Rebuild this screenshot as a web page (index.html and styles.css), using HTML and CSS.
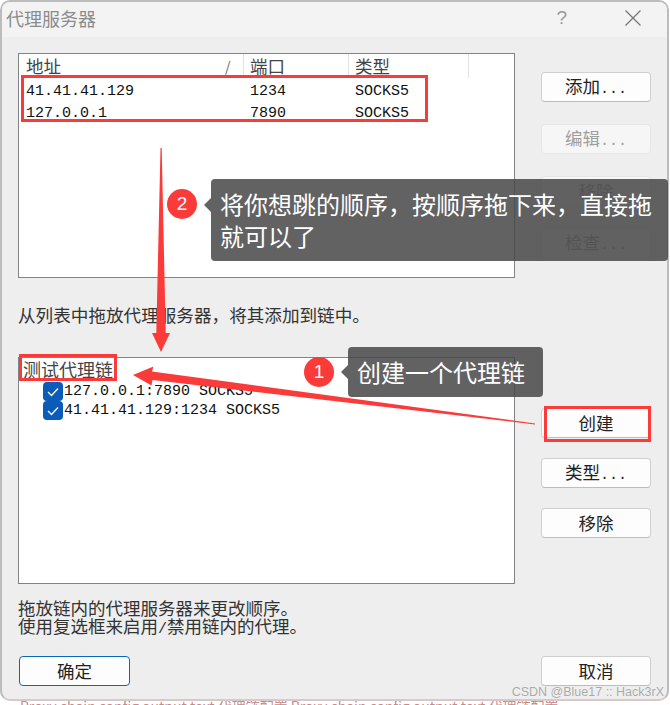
FILE: index.html
```html
<!DOCTYPE html>
<html lang="zh">
<head>
<meta charset="utf-8">
<title>代理服务器</title>
<link rel="stylesheet" href="styles.css">
</head>
<body>
<div class="stage">
  <div class="backdrop-text">Proxy chain config output text 代理链配置 Proxy chain config output text 代理链配置</div>
  <div class="dialog">
    <header class="titlebar">
      <span class="title">代理服务器</span>
      <span class="help">?</span>
      <svg class="close" width="16" height="16" viewBox="0 0 16 16"><path d="M.5.5l15 15M15.500.5l-15 15" stroke="#777" stroke-width="1.300" fill="none"/></svg>
    </header>
    <main class="content">
      <section class="row row-servers">
        <div class="list">
          <div class="grid-row head">
            <span class="cell first">地址<i class="sort">/</i></span>
            <span class="cell">端口</span>
            <span class="cell">类型</span>
            <span class="cell"></span>
          </div>
          <div class="grid-row lat"><span class="cell first">41.41.41.129</span><span class="cell">1234</span><span class="cell">SOCKS5</span></div>
          <div class="grid-row lat"><span class="cell first">127.0.0.1</span><span class="cell">7890</span><span class="cell">SOCKS5</span></div>
        </div>
        <div class="buttons buttons-top">
          <button class="btn">添加<span class="lat">...</span></button>
          <button class="btn off">编辑<span class="lat">...</span></button>
          <button class="btn off">移除</button>
          <button class="btn off">检查<span class="lat">...</span></button>
        </div>
      </section>
      <p class="hint">从列表中拖放代理服务器，将其添加到链中。</p>
      <section class="row row-chain">
        <div class="list chain">
          <div class="chain-name">测试代理链</div>
          <div class="chain-item lat"><span class="check"><svg width="12" height="10" viewBox="0 0 12 10"><path d="M1 5l3.500 3.500L11 1.500" stroke="#fff" stroke-width="1.300" fill="none"/></svg></span>127.0.0.1:7890 SOCKS5</div>
          <div class="chain-item lat"><span class="check"><svg width="12" height="10" viewBox="0 0 12 10"><path d="M1 5l3.500 3.500L11 1.500" stroke="#fff" stroke-width="1.300" fill="none"/></svg></span>41.41.41.129:1234 SOCKS5</div>
        </div>
        <div class="buttons buttons-chain">
          <button class="btn">创建</button>
          <button class="btn">类型<span class="lat">...</span></button>
          <button class="btn">移除</button>
        </div>
      </section>
      <p class="notes">拖放链内的代理服务器来更改顺序。<br>使用复选框来启用<span class="slash">/</span>禁用链内的代理。</p>
      <footer class="actions">
        <button class="btn primary">确定</button>
        <button class="btn">取消</button>
      </footer>
    </main>
  </div>

  <svg class="arrows" width="670" height="705" viewBox="0 0 670 705">
    <path d="M160.500 148h1.200l4 185h4.300L161 352l-9-19h4.300z" fill="#fb3a3a"/>
    <path d="M535 423.500L152 371.500l1.500-5L133 375l18.500 10.500 1-5.500L535 424.500z" fill="#fb3a3a"/>
  </svg>
  <div class="mark mark-servers"></div>
  <div class="mark mark-chain"></div>
  <div class="mark mark-create"></div>
  <div class="badge badge-two">2</div>
  <div class="bubble bubble-two">将你想跳的顺序，按顺序拖下来，直接拖就可以了</div>
  <div class="badge badge-one">1</div>
  <div class="bubble bubble-one">创建一个代理链</div>
  <div class="watermark">CSDN @Blue17 :: Hack3rX</div>
</div>
</body>
</html>
```
FILE: styles.css
```css
* { box-sizing: border-box; }
html, body { margin: 0; padding: 0; }
body { background: #fff; }
.stage {
  position: relative;
  width: 670px;
  height: 705px;
  overflow: hidden;
  background: #fff;
  font-family: "Noto Sans CJK SC", sans-serif;
  color: #222;
}
.backdrop-text {
  position: absolute;
  left: 20px;
  top: 698px;
  white-space: nowrap;
  font-size: 14px;
  line-height: 16px;
  color: #c98a8a;
}
.dialog {
  position: relative;
  width: 669px;
  height: 701px;
  background: #eee;
  border: 2px solid #bcbcbc;
  border-bottom-color: #d8c8c8;
  border-radius: 10px;
  overflow: hidden;
}
.titlebar {
  display: flex;
  align-items: center;
  height: 35px;
  padding: 0 26px 4px 4px;
  background: #f3f3f3;
}
.title { font-size: 18px; color: #8b8b8b; flex: 1; }
.help { font-size: 19px; color: #999; margin-right: 58px; font-family: "Liberation Sans", sans-serif; }
.content { padding: 16px 16px 0 16px; }
.row { display: flex; justify-content: space-between; }
.list {
  width: 497px;
  background: #fff;
  border: 1px solid #80838a;
}
.row-servers .list { height: 225px; }
.lat { font-family: "Liberation Mono", monospace; font-size: 15px; }
.grid-row {
  display: grid;
  grid-template-columns: 225px 105px 120px;
  height: 22px;
  align-items: center;
  line-height: 22px;
}
.head { height: 24px; margin-bottom: 3px; font-size: 17.500px; color: #444; grid-template-columns: 225px 105px 120px 1px; }
.head .cell { border-right: 1px solid #e2e2e2; height: 24px; line-height: 24px; position: relative; }
.head .cell:last-child { border: 0; }
.cell { padding-left: 6px; white-space: nowrap; color: #111; }
.head .cell { color: #444; }
.cell.first { padding-left: 7px; }
.sort { position: absolute; left: 206px; top: 0; font-size: 14px; font-style: normal; color: #666; }
.buttons { display: flex; flex-direction: column; width: 110px; }
.buttons-top { padding-top: 19px; gap: 22px; }
.buttons-chain { padding-top: 51px; gap: 20px; }
.btn {
  height: 30px;
  width: 110px;
  padding: 0;
  background: #fdfdfd;
  border: 1px solid #d0d0d0;
  border-bottom-color: #bdbdbd;
  border-radius: 4px;
  font-family: inherit;
  font-size: 17.500px;
  line-height: 26px;
  color: #222;
}
.btn.off { background: #f6f6f6; border-color: #e6e6e6; color: #a0a0a0; }
.hint {
  margin: 25px 0 0;
  height: 54px;
  font-size: 17.600px;
  line-height: 24px;
  color: #333;
}
.row-chain .list { height: 227px; padding-left: 4px; }
.chain-name { height: 24px; font-size: 18px; line-height: 22px; color: #444; }
.chain-item { display: flex; align-items: center; height: 19px; padding-left: 20px; color: #111; }
.check {
  display: flex;
  align-items: center;
  justify-content: center;
  width: 20px;
  height: 19px;
  margin-right: 1px;
  background: #0a5cb8;
  border-radius: 4px;
}
.notes {
  margin: 15px 0 0;
  height: 57px;
  font-size: 17.500px;
  line-height: 18px;
  color: #333;
  white-space: nowrap;
}
.slash { font-family: "Liberation Mono", monospace; font-size: 15px; }
.actions { display: flex; justify-content: space-between; padding-left: 1px; }
.btn.primary { width: 111px; border: 1px solid #0a67c0; }
.arrows { position: absolute; left: 0; top: 0; pointer-events: none; }
.mark { position: absolute; border: 3px solid #fb3a3a; }
.mark-servers { left: 21px; top: 75px; width: 407px; height: 47px; }
.mark-chain { left: 19px; top: 354px; width: 98px; height: 27px; }
.mark-create { left: 544px; top: 406px; width: 107px; height: 36px; }
.badge {
  position: absolute;
  width: 30px;
  height: 30px;
  border-radius: 50%;
  background: #fb3a3a;
  color: #fff;
  font-family: "Liberation Sans", sans-serif;
  font-size: 19px;
  line-height: 30px;
  text-align: center;
}
.badge-two { left: 167px; top: 189px; }
.badge-one { left: 304px; top: 357px; }
.bubble {
  position: absolute;
  padding-left: 9px;
  background: rgba(70, 70, 70, .85);
  border-radius: 4px;
  color: #fff;
  font-size: 24px;
}
.bubble::before {
  content: "";
  position: absolute;
  left: -7px;
  top: 19px;
  border: 7px solid transparent;
  border-left: 0;
  border-right-color: rgba(70, 70, 70, .85);
}
.bubble-two { left: 211px; top: 179px; width: 457px; height: 82px; padding-top: 9px; padding-right: 14px; line-height: 32px; }
.bubble-one { left: 348px; top: 347px; width: 195px; height: 50px; line-height: 50px; }
.bubble-one::before { top: 18px; }
.watermark {
  position: absolute;
  right: 6px;
  top: 684px;
  font-family: "Liberation Sans", sans-serif;
  font-size: 12.500px;
  line-height: 16px;
  color: #a9a9a9;
  text-shadow: 0 0 1px #fff;
  white-space: nowrap;
}
```
